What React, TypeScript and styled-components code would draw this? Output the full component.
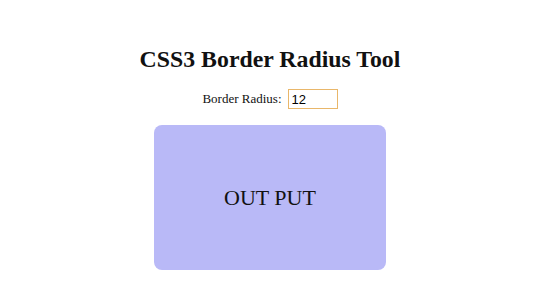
import styled, { createGlobalStyle } from 'styled-components';
import { useState } from 'react';

const GlobalStyle = createGlobalStyle`
  body {
    margin: 0;
    background: #ffffff;
    font-family: "Liberation Serif", "Times New Roman", serif;
    color: #111111;
  }
`;

export default function App() {
  const [radius, setRadius] = useState('12');

  return (
    <Page>
      <GlobalStyle />
      <Title>CSS3 Border Radius Tool</Title>
      <Controls>
        <Label htmlFor="radius">Border Radius:</Label>
        <RadiusInput
          id="radius"
          value={radius}
          onChange={(e) => setRadius(e.target.value)}
        />
      </Controls>
      <Output>OUT PUT</Output>
    </Page>
  );
}

const Page = styled.div`
  width: 540px;
  display: flex;
  flex-direction: column;
  align-items: center;
  padding-top: 45px;
`;

const Title = styled.h1`
  margin: 0;
  font-size: 23.8px;
  font-weight: bold;
  line-height: 28px;
`;

const Controls = styled.div`
  display: flex;
  align-items: center;
  gap: 6px;
  margin-top: 16px;
`;

const Label = styled.label`
  font-size: 13px;
`;

const RadiusInput = styled.input`
  width: 42px;
  height: 18px;
  padding: 0 3px;
  border: 1px solid #e9b76a;
  outline: none;
  font-family: "Liberation Sans", Arial, sans-serif;
  font-size: 13px;
  color: #000;
`;

const Output = styled.div`
  width: 232px;
  height: 145px;
  margin-top: 16px;
  background: #b9b9f7;
  border-radius: 8px;
  display: flex;
  align-items: center;
  justify-content: center;
  font-size: 22px;
`;
